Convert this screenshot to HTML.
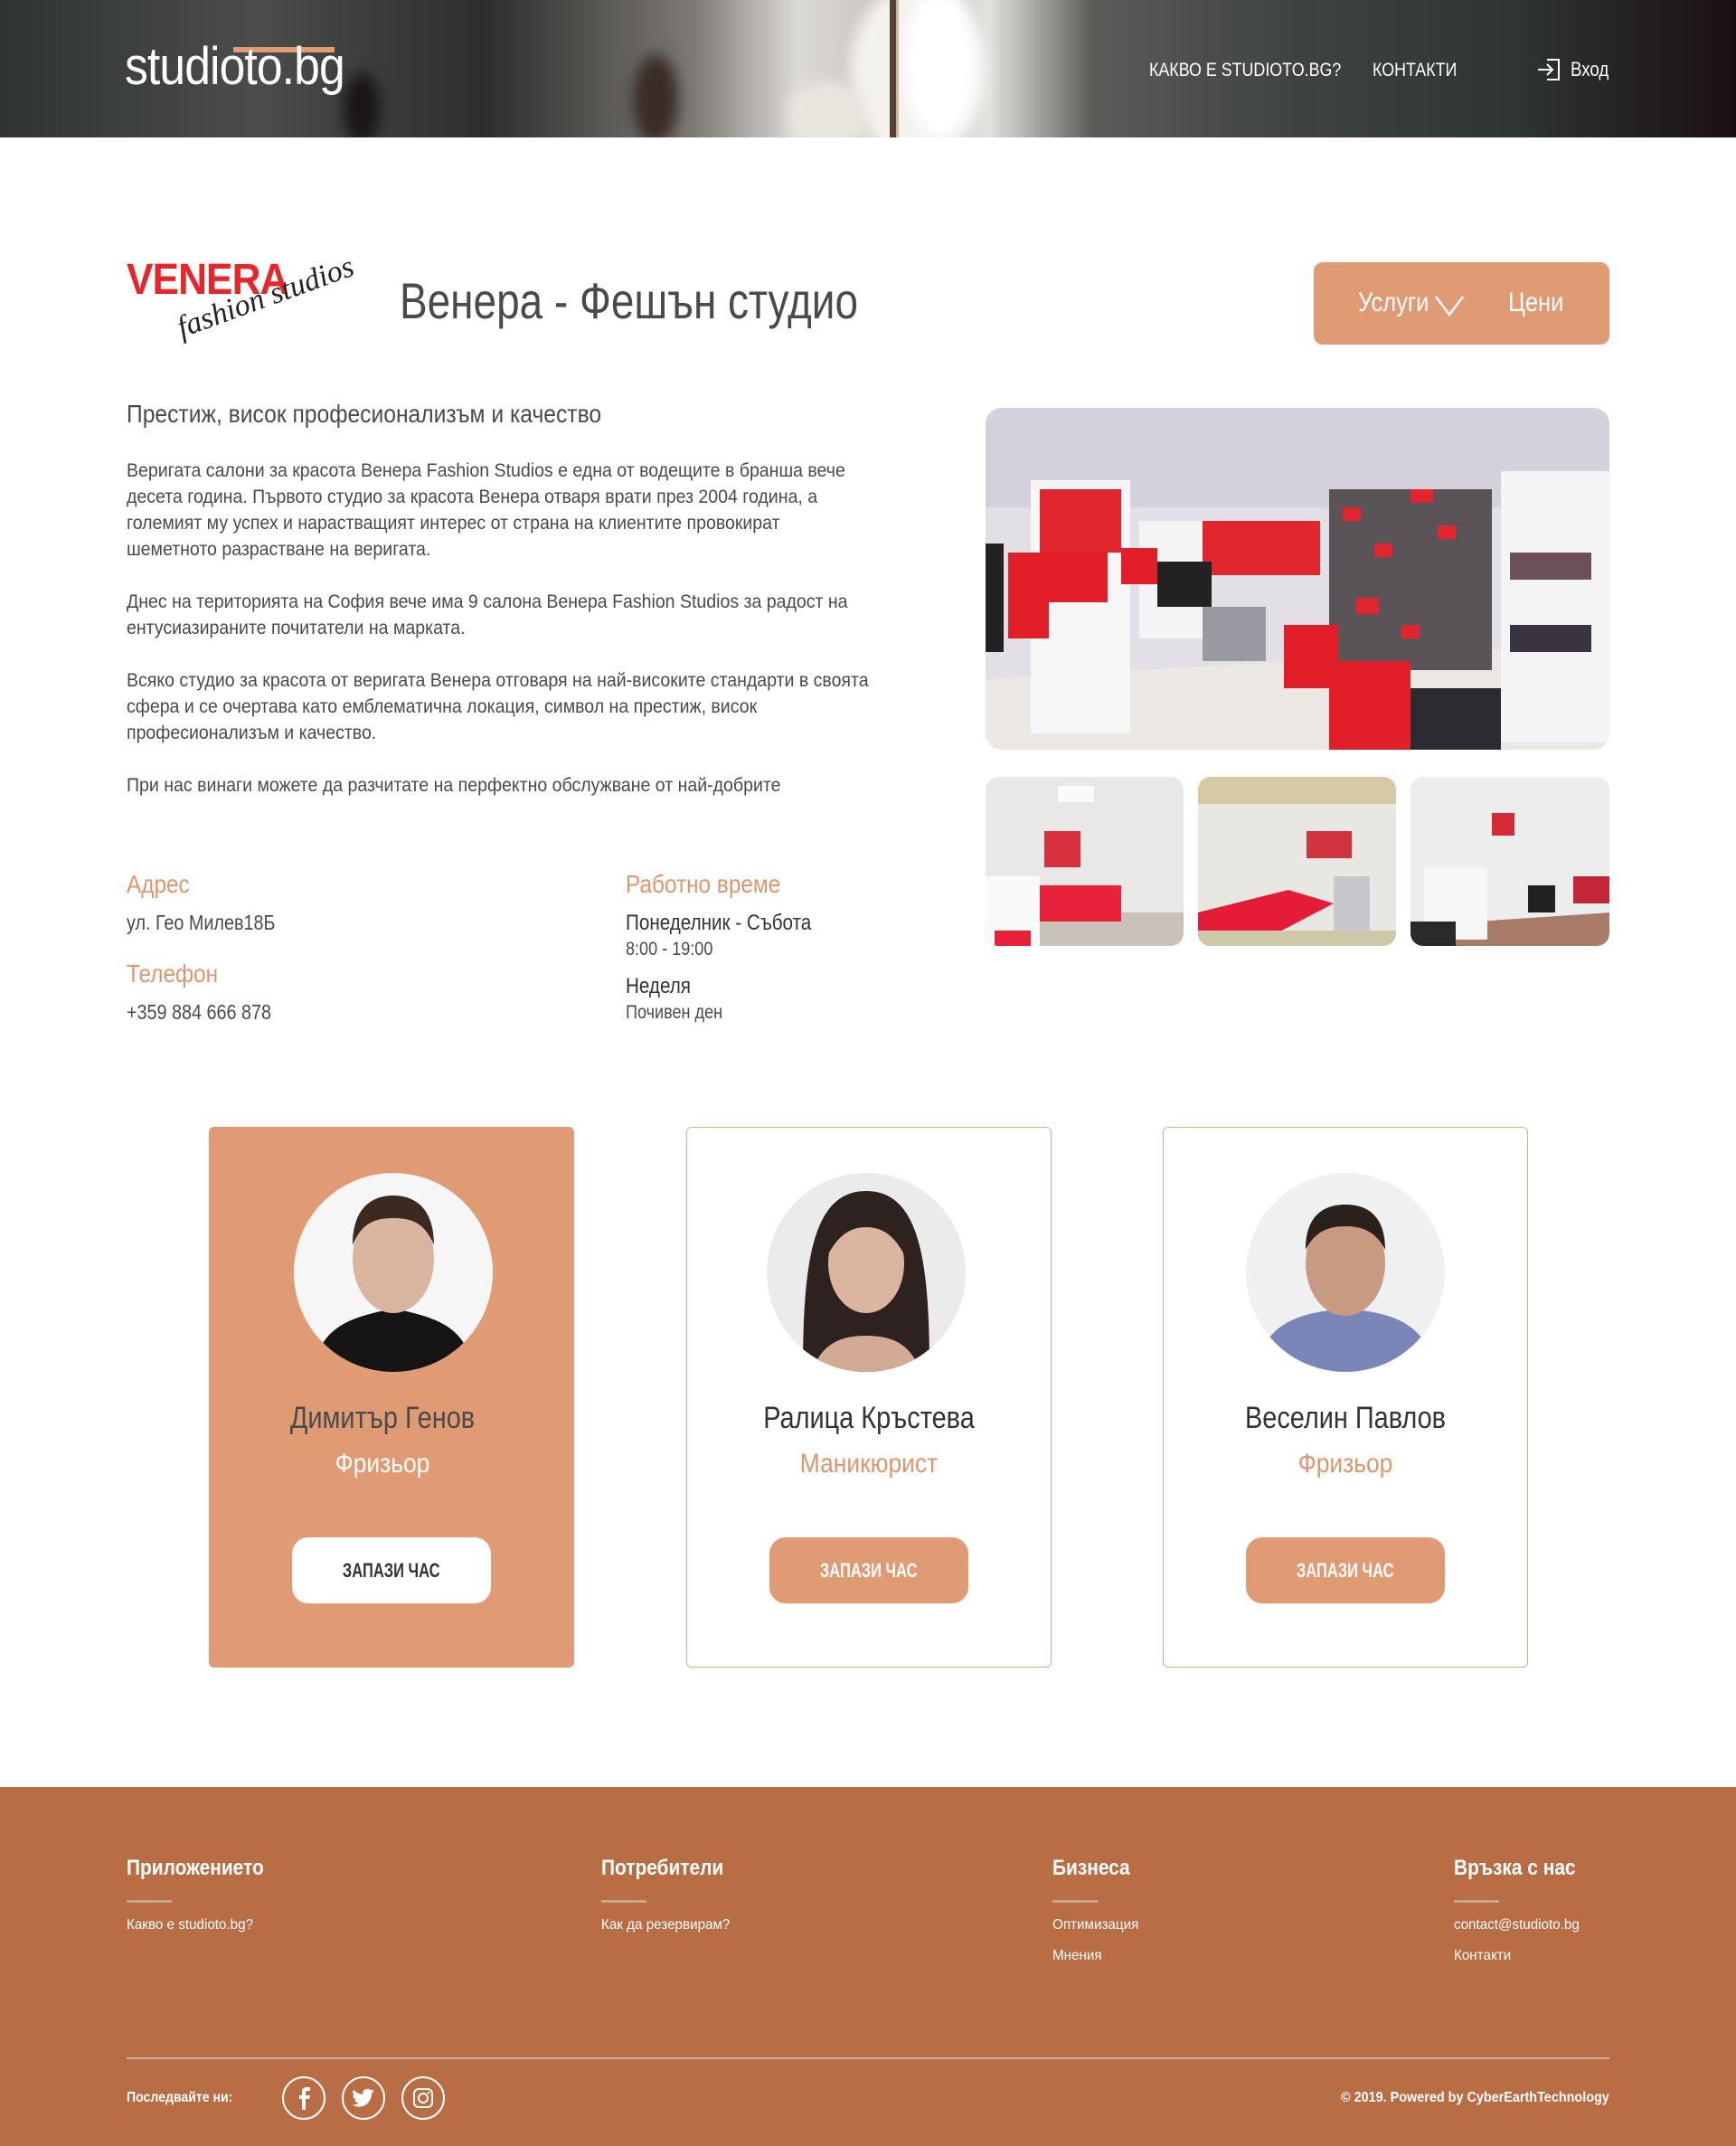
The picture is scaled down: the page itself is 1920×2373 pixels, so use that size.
<!DOCTYPE html>
<html><head><meta charset="utf-8">
<style>
*{margin:0;padding:0;box-sizing:border-box}
body{width:1920px;height:2373px;position:relative;background:#fff;font-family:"Liberation Sans Narrow","Liberation Sans","Noto Sans CJK SC",sans-serif;color:#4a4a4a;overflow:hidden}
.a{position:absolute;white-space:nowrap;transform-origin:left center}
.hdr{position:absolute;left:0;top:0;width:1920px;height:152px;overflow:hidden;
background:linear-gradient(90deg,#2f3432 0%,#4a4d4b 15%,#2e2e2c 28%,#7d7a76 40%,#dcdad6 46%,#bfbcb6 52%,#e2e0dc 57%,#5a5c58 63%,#3e4340 75%,#2d3431 88%,#1b1012 100%)}
.hdr .blob{position:absolute;border-radius:50%;filter:blur(8px)}
.p{font-size:21px;line-height:29px;color:#4a4a4a;transform:scaleX(.93)}
.lbl{font-size:28px;color:#e0956c;transform:scaleX(.87)}
.card{position:absolute;top:1246px;width:404px;height:598px;border-radius:6px}
.c{transform-origin:center center}
.btn{position:absolute;width:220px;height:73px;border-radius:18px;text-align:center;line-height:73px;font-size:22px;font-weight:bold}
.btn span{display:inline-block;transform:scaleX(.75)}
.ft{color:#fff}
.fh{font-size:24px;font-weight:bold;transform:scaleX(.87)}
.fl{font-size:16px;transform:scaleX(.95)}
.ul{position:absolute;width:50px;height:3px;background:#c9a590;top:2101px}
</style></head><body>

<div class="hdr">
  <div class="blob" style="left:940px;top:-20px;width:150px;height:200px;background:#f4f2ee"></div>
  <div class="blob" style="left:1000px;top:-10px;width:80px;height:160px;background:#fff"></div>
  <div class="blob" style="left:870px;top:90px;width:90px;height:80px;background:#e9e5df"></div>
  <div class="blob" style="left:700px;top:60px;width:50px;height:100px;background:#3a2c26"></div>
  <div class="blob" style="left:380px;top:80px;width:40px;height:80px;background:#1a1518"></div>
  <div style="position:absolute;left:984px;top:0;width:8px;height:152px;background:#5a4030"></div>
  <div style="position:absolute;left:991px;top:0;width:3px;height:152px;background:#c8b8a0"></div>
</div>
<div style="position:absolute;left:258px;top:52px;width:112px;height:6px;background:#e09a74"></div>
<div class="a" style="left:138px;top:40px;font-size:58px;color:#fff;letter-spacing:-1px;transform:scaleX(.89)">studioto.bg</div>
<div class="a" style="left:1271px;top:66px;font-size:21px;color:#fff;transform:scaleX(.85)">КАКВО Е STUDIOTO.BG?</div>
<div class="a" style="left:1518px;top:66px;font-size:21px;color:#fff;transform:scaleX(.85)">КОНТАКТИ</div>
<svg class="a" style="left:1699px;top:64px" width="28" height="26" viewBox="0 0 28 26"><path d="M12 2h13v22H12M2 13h16M12 7l6 6-6 6" fill="none" stroke="#fff" stroke-width="2"/></svg>
<div class="a" style="left:1737px;top:64px;font-size:22px;color:#fff;transform:scaleX(.85)">Вход</div>

<!-- venera logo -->
<div class="a" style="left:140px;top:282px;font-size:48px;font-weight:bold;color:#e8262a;letter-spacing:-1px;transform:scaleX(0.92)">VENERA</div>
<div class="a" style="left:204px;top:344px;font-size:34px;font-family:'Liberation Serif',serif;font-style:italic;color:#222;transform:rotate(-20deg);transform-origin:left bottom">fashion studios</div>
<div class="a" style="left:442px;top:300px;font-size:56px;color:#4a4a4a;transform:scaleX(.82)">Венера - Фешън студио</div>
<div style="position:absolute;left:1453px;top:290px;width:327px;height:91px;border-radius:10px;background:#e09a74"></div>
<div class="a" style="left:1502px;top:318px;font-size:30px;color:#fff;transform:scaleX(.85)">Услуги</div>
<svg class="a" style="left:1586px;top:326px" width="34" height="24"><path d="M2 2l15 20 15-20" fill="none" stroke="#fff" stroke-width="2.5"/></svg>
<div class="a" style="left:1668px;top:318px;font-size:30px;color:#fff;transform:scaleX(.85)">Цени</div>

<div class="a" style="left:140px;top:442px;font-size:28px;color:#4a4a4a;transform:scaleX(.88)">Престиж, висок професионализъм и качество</div>
<div class="a p" style="left:140px;top:506px">Веригата салони за красота Венера Fashion Studios е една от водещите в бранша вече<br>десета година. Първото студио за красота Венера отваря врати през 2004 година, а<br>големият му успех и нарастващият интерес от страна на клиентите провокират<br>шеметното разрастване на веригата.</div>
<div class="a p" style="left:140px;top:651px">Днес на територията на София вече има 9 салона Венера Fashion Studios за радост на<br>ентусиазираните почитатели на марката.</div>
<div class="a p" style="left:140px;top:738px">Всяко студио за красота от веригата Венера отговаря на най-високите стандарти в своята<br>сфера и се очертава като емблематична локация, символ на престиж, висок<br>професионализъм и качество.</div>
<div class="a p" style="left:140px;top:854px">При нас винаги можете да разчитате на перфектно обслужване от най-добрите</div>

<div class="a lbl" style="left:140px;top:962px">Адрес</div>
<div class="a" style="left:140px;top:1007px;font-size:23px;transform:scaleX(.86)">ул. Гео Милев18Б</div>
<div class="a lbl" style="left:140px;top:1061px">Телефон</div>
<div class="a" style="left:140px;top:1106px;font-size:23px;transform:scaleX(.86)">+359 884 666 878</div>
<div class="a lbl" style="left:692px;top:962px">Работно време</div>
<div class="a" style="left:692px;top:1007px;font-size:24px;color:#333;transform:scaleX(.86)">Понеделник - Събота</div>
<div class="a" style="left:692px;top:1038px;font-size:21px;transform:scaleX(.86)">8:00 - 19:00</div>
<div class="a" style="left:692px;top:1077px;font-size:24px;color:#333;transform:scaleX(.86)">Неделя</div>
<div class="a" style="left:692px;top:1108px;font-size:21px;transform:scaleX(.86)">Почивен ден</div>

<!-- main image -->
<svg class="a" style="left:1090px;top:451px" width="690" height="378" viewBox="0 0 690 378">
<defs><clipPath id="c1"><rect width="690" height="378" rx="18"/></clipPath></defs>
<g clip-path="url(#c1)">
<rect width="690" height="378" fill="#e2e0e6"/>
<rect y="0" width="690" height="110" fill="#d4d1da"/>
<polygon points="0,300 690,260 690,378 0,378" fill="#ebe8e4"/>
<rect x="50" y="80" width="110" height="280" fill="#f6f6f6"/>
<rect x="60" y="90" width="90" height="70" fill="#e12630"/>
<rect x="240" y="125" width="130" height="60" fill="#e12630"/>
<rect x="170" y="125" width="70" height="130" fill="#f4f4f4"/>
<rect x="380" y="90" width="180" height="200" fill="#5a5458"/>
<rect x="395" y="110" width="20" height="15" fill="#e12630"/><rect x="430" y="150" width="20" height="15" fill="#e12630"/><rect x="470" y="90" width="25" height="15" fill="#e12630"/><rect x="500" y="130" width="20" height="15" fill="#e12630"/><rect x="410" y="210" width="25" height="18" fill="#e12630"/><rect x="460" y="240" width="20" height="15" fill="#e12630"/>
<rect x="570" y="70" width="120" height="300" fill="#f4f4f6"/>
<rect x="580" y="160" width="90" height="30" fill="#6c4f58"/><rect x="580" y="240" width="90" height="30" fill="#3a3440"/>
<path d="M25 160h110v55H70v40H25z" fill="#e21e28"/>
<rect x="330" y="240" width="60" height="70" fill="#e21e28"/>
<rect x="150" y="155" width="40" height="40" fill="#e21e28"/>
<rect x="240" y="220" width="70" height="60" fill="#9a9aa2"/>
<rect x="190" y="170" width="60" height="50" fill="#222"/>
<rect x="0" y="150" width="20" height="120" fill="#222"/>
<rect x="380" y="280" width="90" height="98" fill="#e21e28"/>
<rect x="470" y="310" width="100" height="68" fill="#2c2c30"/>
</g></svg>
<!-- thumbs -->
<svg class="a" style="left:1090px;top:859px" width="219" height="187"><defs><clipPath id="t1"><rect width="219" height="187" rx="14"/></clipPath></defs><g clip-path="url(#t1)"><rect width="219" height="187" fill="#eae8e6"/><rect y="150" width="219" height="37" fill="#c8c2ba"/><rect x="60" y="120" width="90" height="40" fill="#e8223a"/><rect x="65" y="60" width="40" height="40" fill="#d8303c"/><rect x="0" y="110" width="60" height="77" fill="#fafafa"/><rect x="10" y="170" width="40" height="17" fill="#e8223a"/><rect x="80" y="10" width="40" height="18" fill="#fafafa"/></g></svg>
<svg class="a" style="left:1325px;top:859px" width="219" height="187"><defs><clipPath id="t2"><rect width="219" height="187" rx="14"/></clipPath></defs><g clip-path="url(#t2)"><rect width="219" height="187" fill="#e9e7e2"/><rect width="219" height="30" fill="#d6c9a6"/><polygon points="0,150 100,125 150,140 60,187 0,187" fill="#e51b38"/><rect x="120" y="60" width="50" height="30" fill="#d0353f"/><rect x="150" y="110" width="40" height="77" fill="#c8c8cc"/><rect y="170" width="219" height="17" fill="#cfc8a8"/></g></svg>
<svg class="a" style="left:1560px;top:859px" width="220" height="187"><defs><clipPath id="t3"><rect width="220" height="187" rx="14"/></clipPath></defs><g clip-path="url(#t3)"><rect width="220" height="187" fill="#eceded"/><polygon points="0,165 220,150 220,187 0,187" fill="#a87a68"/><rect x="130" y="120" width="30" height="30" fill="#222"/><rect x="180" y="110" width="40" height="30" fill="#c4263a"/><rect x="90" y="40" width="25" height="25" fill="#d52a34"/><rect x="15" y="100" width="70" height="80" fill="#f6f6f6"/><rect x="0" y="160" width="50" height="27" fill="#2a2a2a"/></g></svg>

<!-- cards -->
<div class="card" style="left:231px;background:#e09a74"></div>
<div class="card" style="left:759px;border:1.5px solid #e6a887"></div>
<div class="card" style="left:1286px;border:1.5px solid #e6a887"></div>

<svg class="a" style="left:325px;top:1297px" width="220" height="220"><defs><clipPath id="a1"><circle cx="110" cy="110" r="110"/></clipPath></defs><g clip-path="url(#a1)"><rect width="220" height="220" fill="#f6f6f6"/><path d="M20 220c10-50 40-60 90-70 50 10 80 20 90 70z" fill="#151515"/><ellipse cx="110" cy="95" rx="45" ry="60" fill="#d9b49e"/><path d="M65 80c0-40 20-55 45-55s45 15 45 55c-10-25-25-30-45-30s-35 5-45 30z" fill="#3a2a22"/></g></svg>
<svg class="a" style="left:848px;top:1297px" width="220" height="220"><defs><clipPath id="a2"><circle cx="110" cy="110" r="110"/></clipPath></defs><g clip-path="url(#a2)"><rect width="220" height="220" fill="#ecebeb"/><path d="M40 220c0-120 10-200 70-200s70 80 70 200z" fill="#2d2220"/><path d="M50 220c10-30 30-40 60-40s50 10 60 40z" fill="#d2aa96"/><ellipse cx="110" cy="100" rx="42" ry="55" fill="#dcb5a0"/><path d="M68 90c0-40 18-55 42-55s42 15 42 55c-12-22-25-30-42-30s-30 8-42 30z" fill="#2d2220"/></g></svg>
<svg class="a" style="left:1378px;top:1297px" width="220" height="220"><defs><clipPath id="a3"><circle cx="110" cy="110" r="110"/></clipPath></defs><g clip-path="url(#a3)"><rect width="220" height="220" fill="#f0f0f0"/><path d="M10 220c10-50 40-65 100-70 60 5 90 20 100 70z" fill="#7a86b8"/><ellipse cx="110" cy="100" rx="44" ry="58" fill="#c99a82"/><path d="M66 85c0-38 20-50 44-50s44 12 44 50c-10-20-25-26-44-26s-34 6-44 26z" fill="#2a201c"/></g></svg>

<div class="a c" style="left:221px;width:404px;text-align:center;top:1549px;font-size:34px;color:#4a4a4a;transform:scaleX(.85)">Димитър Генов</div>
<div class="a c" style="left:221px;width:404px;text-align:center;top:1602px;font-size:30px;color:#fff;transform:scaleX(.88)">Фризьор</div>
<div class="btn" style="left:323px;top:1700px;background:#fff;color:#333"><span>ЗАПАЗИ ЧАС</span></div>

<div class="a c" style="left:759px;width:404px;text-align:center;top:1549px;font-size:34px;color:#333;transform:scaleX(.85)">Ралица Кръстева</div>
<div class="a c" style="left:759px;width:404px;text-align:center;top:1602px;font-size:30px;color:#e0956c;transform:scaleX(.88)">Маникюрист</div>
<div class="btn" style="left:851px;top:1700px;background:#e09a74;color:#fff"><span>ЗАПАЗИ ЧАС</span></div>

<div class="a c" style="left:1286px;width:404px;text-align:center;top:1549px;font-size:34px;color:#333;transform:scaleX(.85)">Веселин Павлов</div>
<div class="a c" style="left:1286px;width:404px;text-align:center;top:1602px;font-size:30px;color:#e0956c;transform:scaleX(.88)">Фризьор</div>
<div class="btn" style="left:1378px;top:1700px;background:#e09a74;color:#fff"><span>ЗАПАЗИ ЧАС</span></div>

<!-- footer -->
<div style="position:absolute;left:0;top:1976px;width:1920px;height:397px;background:#b86d45"></div>
<div class="a ft fh" style="left:140px;top:2052px">Приложението</div>
<div class="a ft fh" style="left:665px;top:2052px">Потребители</div>
<div class="a ft fh" style="left:1164px;top:2052px">Бизнеса</div>
<div class="a ft fh" style="left:1608px;top:2052px">Връзка с нас</div>
<div class="ul" style="left:140px"></div><div class="ul" style="left:665px"></div><div class="ul" style="left:1164px"></div><div class="ul" style="left:1608px"></div>
<div class="a ft fl" style="left:140px;top:2120px">Какво е studioto.bg?</div>
<div class="a ft fl" style="left:665px;top:2120px">Как да резервирам?</div>
<div class="a ft fl" style="left:1164px;top:2120px">Оптимизация</div>
<div class="a ft fl" style="left:1164px;top:2154px">Мнения</div>
<div class="a ft fl" style="left:1608px;top:2120px">contact@studioto.bg</div>
<div class="a ft fl" style="left:1608px;top:2154px">Контакти</div>
<div style="position:absolute;left:140px;top:2275px;width:1640px;height:2px;background:#c8b2a6"></div>
<div class="a ft" style="left:140px;top:2311px;font-size:16px;font-weight:bold;transform:scaleX(.88)">Последвайте ни:</div>
<svg class="a" style="left:311px;top:2295px" width="184" height="50" viewBox="0 0 184 50">
<g fill="none" stroke="#fff" stroke-width="2"><circle cx="25" cy="25" r="23"/><circle cx="91" cy="25" r="23"/><circle cx="157" cy="25" r="23"/><rect x="147" y="15" width="20" height="20" rx="5"/><circle cx="157" cy="25" r="5"/></g>
<path d="M27 38V26h4l1-4h-5v-3c0-1 .5-2 2-2h3v-4h-4c-4 0-5 2-5 5v4h-3v4h3v12z" fill="#fff"/>
<path d="M103 17c-1 .5-2 .7-3 .8 1-.6 2-1.6 2-2.6-1 .6-2 1-3 1.2a5 5 0 0 0-8.6 4.5c-4-.2-8-2.2-10.4-5.2-1.4 2.3-.6 5.3 1.5 6.7-.8 0-1.6-.2-2.2-.6 0 2.5 1.7 4.6 4 5-.7.2-1.5.2-2.2.1.6 2 2.5 3.5 4.7 3.5a10 10 0 0 1-7.4 2c2.2 1.4 4.8 2.2 7.5 2.2 9 0 14.2-7.6 14-14.5 1-.7 1.8-1.6 2.4-2.6z" fill="#fff"/>
<circle cx="163" cy="19" r="1.3" fill="#fff"/>
</svg>
<div style="position:absolute;right:140px;top:2311px;white-space:nowrap;color:#fff;font-size:16px;font-weight:bold;transform:scaleX(.9);transform-origin:right center">© 2019. Powered by CyberEarthTechnology</div>
</body></html>
